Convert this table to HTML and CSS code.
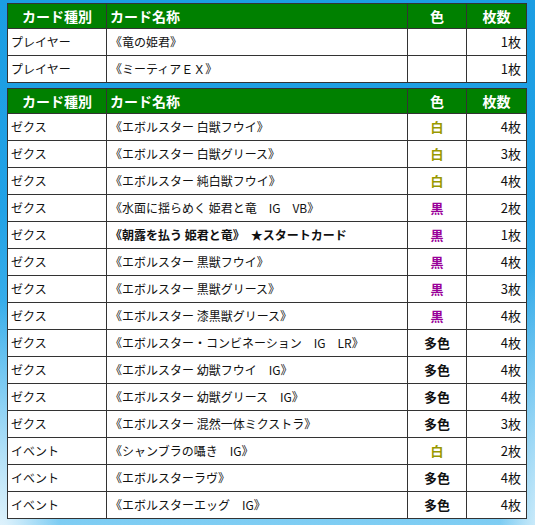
FILE: index.html
```html
<!DOCTYPE html>
<html lang="ja">
<head>
<meta charset="utf-8">
<title>デッキレシピ</title>
<link rel="stylesheet" href="styles.css">
</head>
<body>
<table class="deck">
  <colgroup><col class="c-type"><col class="c-name"><col class="c-color"><col class="c-num"></colgroup>
  <thead>
    <tr><th class="t-type">カード種別</th><th class="t-name">カード名称</th><th>色</th><th>枚数</th></tr>
  </thead>
  <tbody>
    <tr><td>プレイヤー</td><td>《竜の姫君》</td><td class="color"></td><td class="num">1枚</td></tr>
    <tr><td>プレイヤー</td><td>《ミーティアＥＸ》</td><td class="color"></td><td class="num">1枚</td></tr>
  </tbody>
</table>
<table class="deck second">
  <colgroup><col class="c-type"><col class="c-name"><col class="c-color"><col class="c-num"></colgroup>
  <thead>
    <tr><th class="t-type">カード種別</th><th class="t-name">カード名称</th><th>色</th><th>枚数</th></tr>
  </thead>
  <tbody>
    <tr><td>ゼクス</td><td>《エボルスター 白獣フウイ》</td><td class="color white">白</td><td class="num">4枚</td></tr>
    <tr><td>ゼクス</td><td>《エボルスター 白獣グリース》</td><td class="color white">白</td><td class="num">3枚</td></tr>
    <tr><td>ゼクス</td><td>《エボルスター 純白獣フウイ》</td><td class="color white">白</td><td class="num">4枚</td></tr>
    <tr><td>ゼクス</td><td>《水面に揺らめく 姫君と竜　IG　VB》</td><td class="color black">黒</td><td class="num">2枚</td></tr>
    <tr><td>ゼクス</td><td class="start">《朝露を払う 姫君と竜》　★スタートカード</td><td class="color black">黒</td><td class="num">1枚</td></tr>
    <tr><td>ゼクス</td><td>《エボルスター 黒獣フウイ》</td><td class="color black">黒</td><td class="num">4枚</td></tr>
    <tr><td>ゼクス</td><td>《エボルスター 黒獣グリース》</td><td class="color black">黒</td><td class="num">3枚</td></tr>
    <tr><td>ゼクス</td><td>《エボルスター 漆黒獣グリース》</td><td class="color black">黒</td><td class="num">4枚</td></tr>
    <tr><td>ゼクス</td><td>《エボルスター・コンビネーション　IG　LR》</td><td class="color multi">多色</td><td class="num">4枚</td></tr>
    <tr><td>ゼクス</td><td>《エボルスター 幼獣フウイ　IG》</td><td class="color multi">多色</td><td class="num">4枚</td></tr>
    <tr><td>ゼクス</td><td>《エボルスター 幼獣グリース　IG》</td><td class="color multi">多色</td><td class="num">4枚</td></tr>
    <tr><td>ゼクス</td><td>《エボルスター 混然一体ミクストラ》</td><td class="color multi">多色</td><td class="num">3枚</td></tr>
    <tr><td>イベント</td><td>《シャンブラの囁き　IG》</td><td class="color white">白</td><td class="num">2枚</td></tr>
    <tr><td>イベント</td><td>《エボルスターラヴ》</td><td class="color multi">多色</td><td class="num">4枚</td></tr>
    <tr><td>イベント</td><td>《エボルスターエッグ　IG》</td><td class="color multi">多色</td><td class="num">4枚</td></tr>
  </tbody>
</table>
</body>
</html>
```
FILE: styles.css
```css
html, body {
  margin: 0;
  padding: 0;
}
body {
  width: 535px;
  height: 525px;
  overflow: hidden;
  padding: 3px 0 0 7px;
  box-sizing: border-box;
  font-family: "Noto Sans CJK JP", "Noto Sans", sans-serif;
  font-size: 12px;
  line-height: 16px;
  color: #111;
  background:
    radial-gradient(ellipse 60px 260px at 0 560px, rgba(255,255,255,0.85), rgba(255,255,255,0) 100%),
    radial-gradient(ellipse 40px 300px at 540px 560px, rgba(255,255,255,0.7), rgba(255,255,255,0) 100%),
    linear-gradient(to bottom, #1b9de3 0%, #22a2e6 40%, #4db8ee 75%, #7fcdf3 100%);
}
.deck {
  border-collapse: collapse;
  table-layout: fixed;
  width: 519px;
  background: #fff;
  border: 1px solid #333;
}
.second {
  margin-top: 5px;
}
.c-type { width: 99px; }
.c-name { width: 301px; }
.c-color { width: 59px; }
.c-num { width: 60px; }
.deck th, .deck td {
  border: 1px solid #333;
  padding: 0 3px;
  white-space: nowrap;
  overflow: hidden;
}
.deck th {
  height: 24px;
  background: #008000;
  color: #fff;
  font-weight: bold;
  font-size: 14px;
  text-align: center;
}
.deck th.t-name {
  text-align: left;
}
.deck td {
  height: 26px;
}
.deck td.color {
  text-align: center;
  font-size: 13px;
  font-weight: bold;
}
.deck td.num {
  text-align: right;
  padding-right: 5px;
  font-size: 13px;
}
.white { color: #999900; }
.black { color: #990099; }
.multi { color: #111; }
.start { font-weight: bold; }
```
